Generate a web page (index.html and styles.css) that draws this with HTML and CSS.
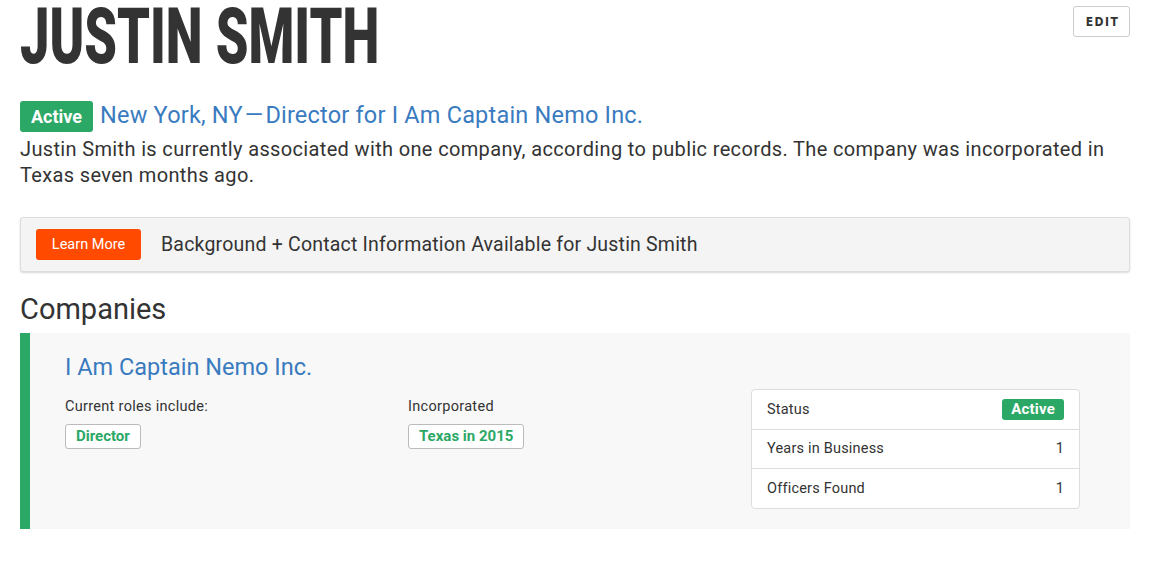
FILE: index.html
```html
<!DOCTYPE html>
<html lang="en">
<head>
    <meta charset="UTF-8">
    <title>Justin Smith</title>
    <link rel="stylesheet" href="styles.css">
</head>
<body>
    <div class="page">
        <div class="header">
            <h1 class="name">JUSTIN SMITH</h1>
            <button class="edit-btn">EDIT</button>
        </div>

        <div class="summary">
            <span class="badge">Active</span>
            <a class="summary-link" href="#">New York, NY<span class="dash">—</span>Director for I Am Captain Nemo Inc.</a>
        </div>
        <p class="intro">Justin Smith is currently associated with one company, according to public records. The company was incorporated in Texas seven months ago.</p>

        <div class="promo">
            <button class="learn-btn">Learn More</button>
            <span class="promo-text">Background + Contact Information Available for Justin Smith</span>
        </div>

        <h2 class="section-title">Companies</h2>

        <div class="company">
            <a class="company-name" href="#">I Am Captain Nemo Inc.</a>
            <div class="company-grid">
                <div class="company-col">
                    <div class="col-label">Current roles include:</div>
                    <span class="tag">Director</span>
                </div>
                <div class="company-col">
                    <div class="col-label">Incorporated</div>
                    <span class="tag">Texas in 2015</span>
                </div>
                <table class="facts">
                    <tr>
                        <td>Status</td>
                        <td class="num"><span class="badge small">Active</span></td>
                    </tr>
                    <tr>
                        <td>Years in Business</td>
                        <td class="num">1</td>
                    </tr>
                    <tr>
                        <td>Officers Found</td>
                        <td class="num">1</td>
                    </tr>
                </table>
            </div>
        </div>
    </div>
</body>
</html>
```

FILE: styles.css
```css
body {
    margin: 0;
    font-family: Roboto, "Liberation Sans", sans-serif;
    color: #333;
    background: #fff;
}
.page {
    padding: 0 25px 0 20px;
}
.header {
    display: flex;
    justify-content: space-between;
    align-items: flex-start;
}
.name {
    margin: 0;
    font-family: Roboto, sans-serif;
    font-weight: 900;
    font-size: 77px;
    line-height: 75px;
    color: #333;
    transform: scaleX(0.68);
    transform-origin: left top;
    white-space: nowrap;
}
.edit-btn {
    margin-top: 6px;
    width: 57px;
    height: 31px;
    background: #fff;
    border: 1px solid #ccc;
    border-radius: 3px;
    font-family: "DejaVu Sans Condensed", sans-serif;
    font-weight: bold;
    font-size: 12px;
    letter-spacing: 1.5px;
    color: #333;
    padding: 0 0 0 2px;
}
.summary {
    margin-top: 26px;
    display: flex;
    align-items: baseline;
    gap: 7px;
}
.badge {
    display: inline-block;
    background: #2ba866;
    color: #fff;
    font-weight: bold;
    font-size: 18px;
    line-height: 31px;
    padding: 0 11px;
    border-radius: 3px;
}
.badge.small {
    font-size: 15px;
    line-height: 21px;
    padding: 0 9px;
}
.summary-link {
    color: #3a7bbf;
    text-decoration: none;
    font-size: 23.5px;
    letter-spacing: 0.2px;
}
.dash {
    margin: 0 2px;
}
.intro {
    margin: 4px 0 0;
    font-size: 20px;
    line-height: 26px;
    letter-spacing: 0.35px;
}
.promo {
    margin-top: 29px;
    display: flex;
    align-items: center;
    gap: 20px;
    padding: 11px 15px;
    background: #f4f4f4;
    border: 1px solid #ddd;
    border-radius: 3px;
    box-shadow: 0 1px 2px rgba(0,0,0,0.15);
}
.learn-btn {
    background: #ff4a00;
    color: #fff;
    border: none;
    border-radius: 3px;
    font-family: Roboto, sans-serif;
    font-size: 14.5px;
    height: 31px;
    padding: 0 10px;
    width: 105px;
}
.promo-text {
    font-size: 19.5px;
    letter-spacing: 0.2px;
}
.section-title {
    margin: 20px 0 7px;
    font-weight: normal;
    font-size: 29px;
    line-height: 34px;
}
.company {
    background: #f8f8f8;
    border-left: 10px solid #2ba866;
    padding: 20px 50px 20px 35px;
}
.company-name {
    color: #3a7bbf;
    text-decoration: none;
    font-size: 23.5px;
}
.company-grid {
    display: grid;
    grid-template-columns: 343px 343px 1fr;
    margin-top: 8px;
    align-items: start;
}
.col-label {
    font-size: 14.5px;
    letter-spacing: 0.3px;
    margin-top: 9px;
}
.tag {
    display: inline-block;
    margin-top: 9px;
    padding: 0 10px;
    line-height: 23px;
    background: #fff;
    border: 1px solid #bbb;
    border-radius: 3px;
    color: #2ba866;
    font-weight: bold;
    font-size: 15px;
}
.facts {
    width: 100%;
    border-collapse: separate;
    border-spacing: 0;
    background: #fff;
    border: 1px solid #ddd;
    border-radius: 4px;
    font-size: 14.5px;
    letter-spacing: 0.2px;
}
.facts td {
    height: 38.5px;
    padding: 0 15px;
    border-top: 1px solid #ddd;
}
.facts tr:first-child td {
    border-top: none;
}
.facts .num {
    text-align: right;
}
```
